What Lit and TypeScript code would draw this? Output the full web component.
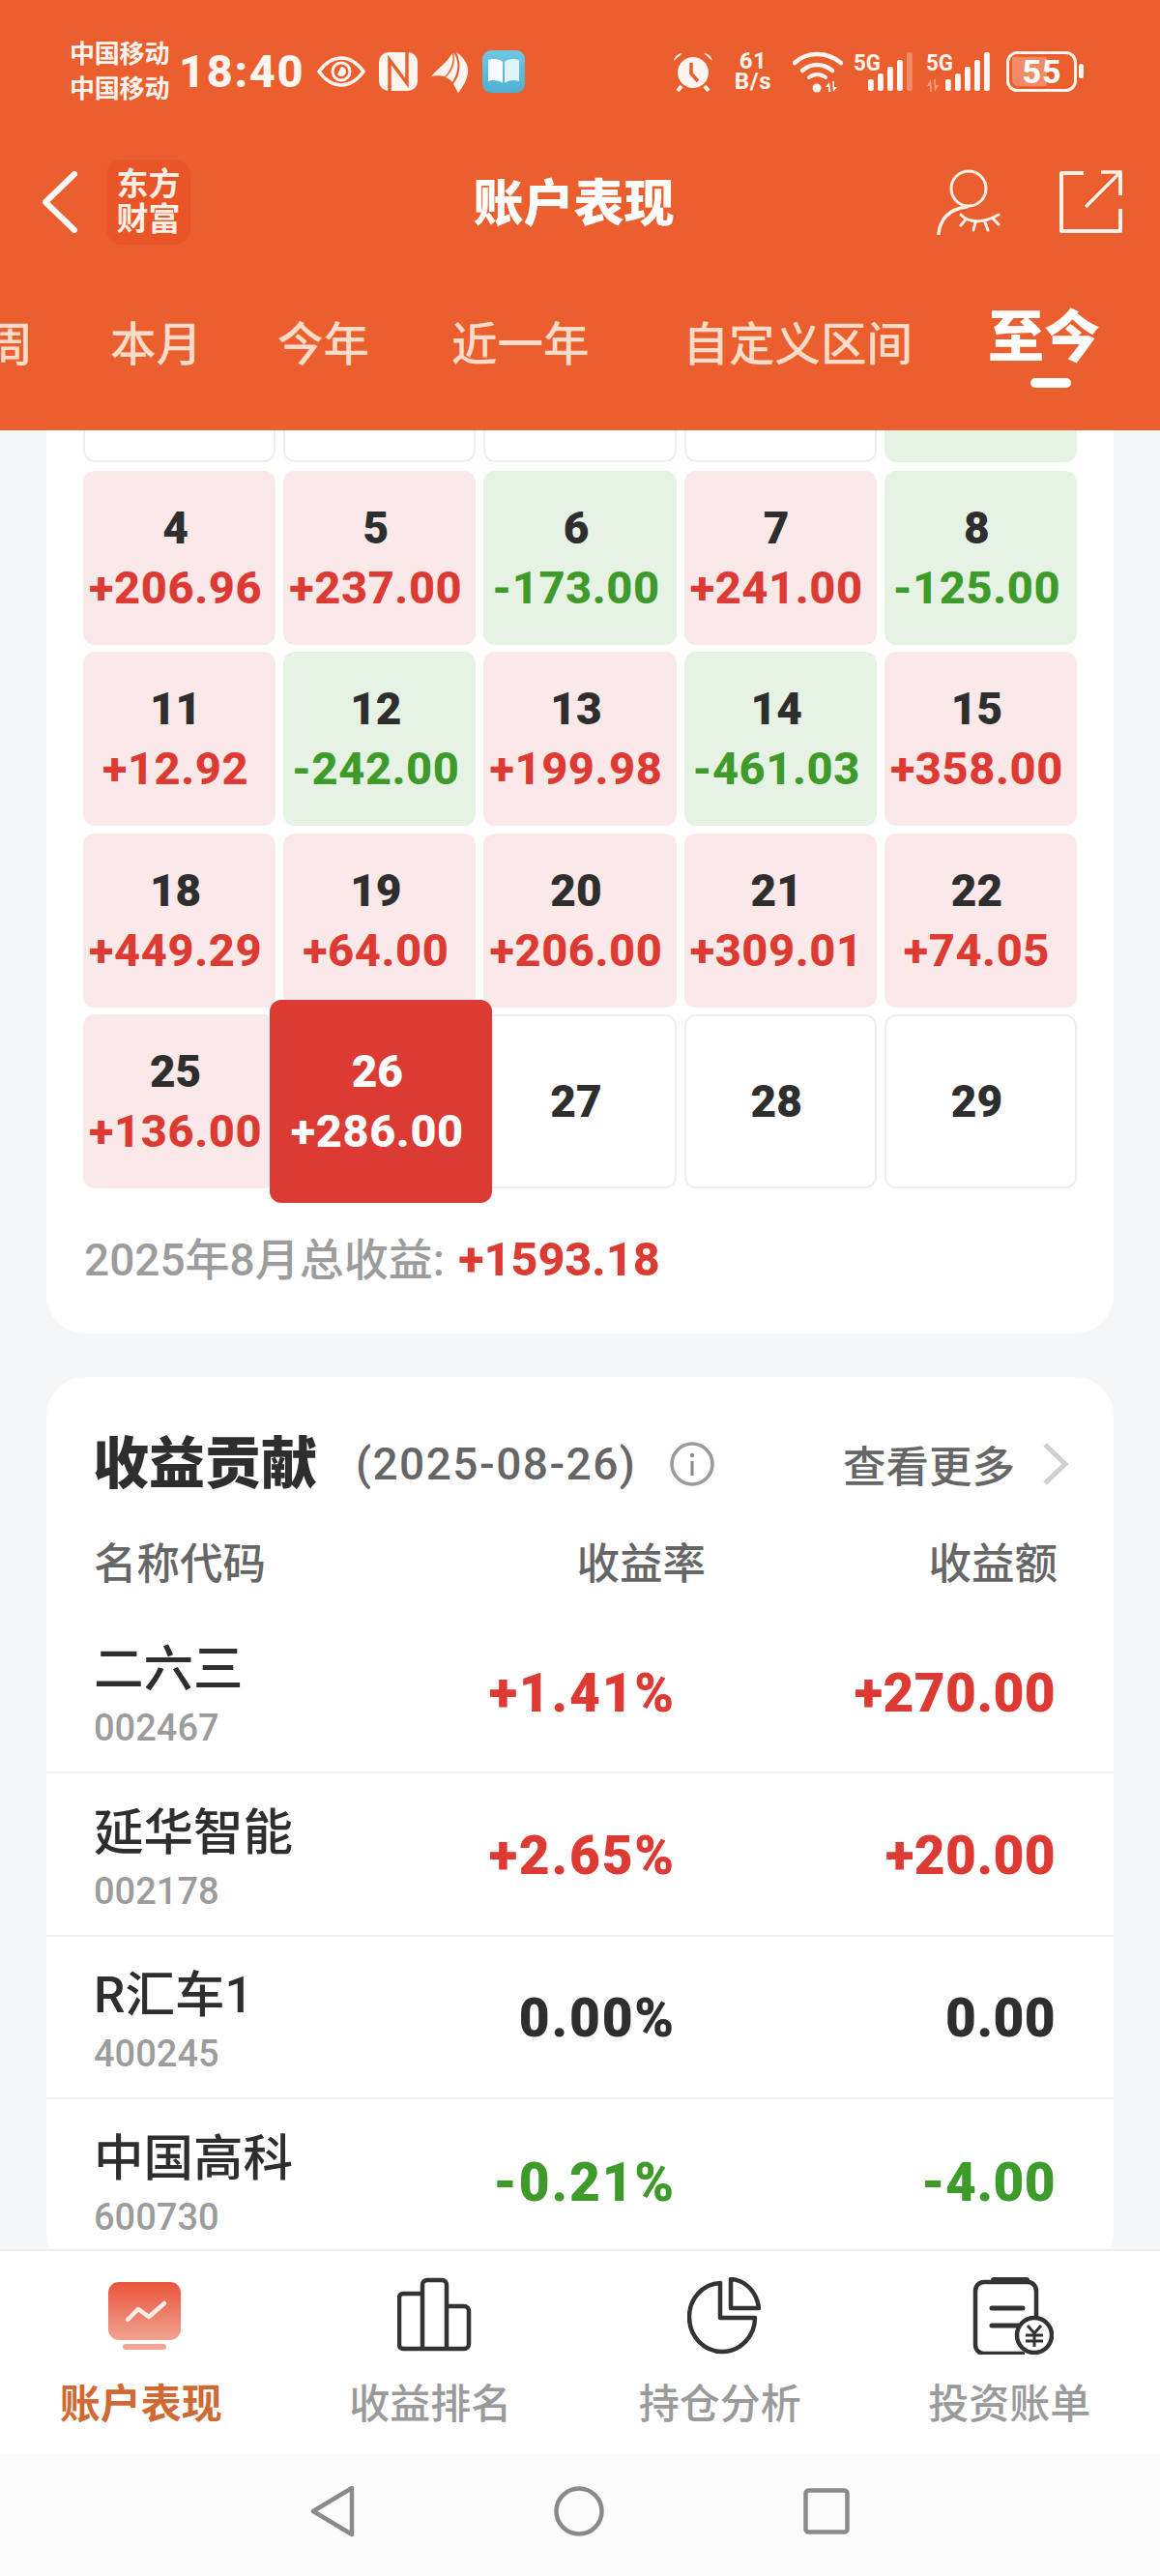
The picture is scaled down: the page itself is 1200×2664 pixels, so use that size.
import { LitElement, html, css, svg } from "lit";
import { customElement } from "lit/decorators.js";

type Cell = { d?: string; v?: string; k: "r" | "g" | "e"; cut?: boolean; today?: boolean };
const cells: Cell[] = [
  { k: "e", cut: true }, { k: "e", cut: true }, { k: "e", cut: true }, { k: "e", cut: true }, { k: "g", cut: true },
  { d: "4", v: "+206.96", k: "r" }, { d: "5", v: "+237.00", k: "r" }, { d: "6", v: "-173.00", k: "g" }, { d: "7", v: "+241.00", k: "r" }, { d: "8", v: "-125.00", k: "g" },
  { d: "11", v: "+12.92", k: "r" }, { d: "12", v: "-242.00", k: "g" }, { d: "13", v: "+199.98", k: "r" }, { d: "14", v: "-461.03", k: "g" }, { d: "15", v: "+358.00", k: "r" },
  { d: "18", v: "+449.29", k: "r" }, { d: "19", v: "+64.00", k: "r" }, { d: "20", v: "+206.00", k: "r" }, { d: "21", v: "+309.01", k: "r" }, { d: "22", v: "+74.05", k: "r" },
  { d: "25", v: "+136.00", k: "r" }, { d: "26", v: "+286.00", k: "r", today: true }, { d: "27", k: "e" }, { d: "28", k: "e" }, { d: "29", k: "e" },
];
const rows = [
  { n: "二六三", c: "002467", r: "+1.41%", a: "+270.00", k: "up" },
  { n: "延华智能", c: "002178", r: "+2.65%", a: "+20.00", k: "up" },
  { n: "R汇车1", c: "400245", r: "0.00%", a: "0.00", k: "flat" },
  { n: "中国高科", c: "600730", r: "-0.21%", a: "-4.00", k: "down" },
];

const HS = [12, 18, 25, 32, 40];
const bars = (x: number, opacityLast: number) =>
  HS.map((h, i) => svg`<rect x=${x + i * 10} y=${42 - h} width="5.8" height=${h} rx="2" fill="#fff8f4" opacity=${i === HS.length - 1 ? opacityLast : 1}></rect>`);

@customElement("app-root")
export class AppRoot extends LitElement {
  static styles = css`
    :host { display: block; width: 1200px; height: 2664px; overflow: hidden; }
    * { box-sizing: border-box; }
    .page { width: 1200px; height: 2664px; display: flex; flex-direction: column; background: #f5f6f8;
      font-family: Roboto, "Noto Sans CJK SC", sans-serif; color: #2e2e2e; }
    .header { height: 445px; background: #ea5f2d; color: #fff; flex: none; display: flex; flex-direction: column; }
    .status { height: 150px; padding: 50px 78px 0 72px; display: flex; justify-content: space-between; align-items: flex-start; color: #fff5f0; }
    .sl, .sr { display: flex; align-items: center; height: 48px; }
    .carrier { width: 102px; font-size: 26px; line-height: 36px; font-weight: 700; letter-spacing: -.2px; white-space: nowrap; }
    .time { font-size: 47px; font-weight: 800; margin: 0 13px 0 11px; letter-spacing: 1.6px; line-height: 48px; }
    .sl svg { display: block; margin-right: 13px; }
    .sr svg { display: block; }
    .alarm { margin-left: 2px; }
    .speed { width: 44px; margin: 0 19px 0 19px; text-align: center; font-weight: 700; font-size: 24px; line-height: 21px; letter-spacing: .6px; }
    .g1 { margin-left: 11px; }
    .g2 { margin-left: 13px; }
    .bat { margin-left: 17px; }
    .nav { height: 118px; display: flex; align-items: center; padding: 0 39px 0 44px; }
    .logo { width: 87px; height: 88px; margin-left: 30px; background: #e95526; border-radius: 16px; color: #fdeee6;
      font-size: 33px; line-height: 36px; font-weight: 600; text-align: center; padding-top: 8px; }
    .title { flex: 1; text-align: center; font-size: 52px; font-weight: 900; margin: -6px 0 0 21px; }
    .share { margin-left: 60px; }
    .nav svg { display: block; }
    .tabs { flex: 1; display: flex; justify-content: flex-end; align-items: flex-start; gap: 78px; padding: 57px 62px 0 0; overflow: hidden; white-space: nowrap; }
    .tab { font-size: 47.5px; line-height: 64px; font-weight: 500; color: #fcdcc9; flex: none; }
    .tab.w0 { margin-left: 2px; }
    .tab.w1 { margin-left: 7px; }
    .tab.w2 { margin-left: 19px; }
    .tab.on { color: #fff; font-size: 58px; font-weight: 900; margin-top: -8px; position: relative; }
    .tab.on::after { content: ""; position: absolute; left: 44px; top: 74px; width: 42px; height: 10px; border-radius: 5px; background: #fff; }
    .main { flex: 1; min-height: 0; overflow: hidden; padding: 0 48px; }
    .card { background: #fff; border-radius: 0 0 40px 40px; }
    .cal { padding: 0 38px; height: 934px; }
    .grid { display: grid; grid-template-columns: repeat(5, 1fr); grid-template-rows: 34px repeat(4, 180px); column-gap: 8px; row-gap: 7.5px; }
    .cell { border-radius: 12px; display: flex; flex-direction: column; align-items: center; justify-content: center; font-weight: 900; font-size: 46px; line-height: 61px; border: 2px solid transparent; white-space: nowrap; padding-right: 8px; }
    .cell.cut { border-radius: 0 0 12px 12px; border-top: 0; margin-bottom: 1px; }
    .cell.r { background: #fbe9e9; color: #dc3a32; }
    .cell.g { background: #e6f3e4; color: #3e9b2b; }
    .cell.e { background: #fff; border-color: #eeeeee; }
    .day { color: #2e2e2e; }
    .val { font-size: 47px; font-weight: 800; letter-spacing: .6px; }
    .cell.today { background: #db3b32; color: #fff; margin: -15px -17px -15px -14px; border: 0; position: relative; z-index: 1; border-radius: 12px; }
    .cell.today .day { color: #fff; }
    .sum { margin-top: 47px; margin-left: 1px; font-size: 46px; line-height: 54px; font-weight: 500; color: #9c9c9c; white-space: nowrap; }
    .sum b { font-size: 48.5px; color: #db3b32; font-weight: 800; margin-left: 3px; }
    .contrib { margin-top: 45px; border-radius: 40px; padding: 58px 0 9px; }
    .chead { display: flex; align-items: center; padding: 0 46px 0 48px; height: 64px; }
    .chead h2 { margin: 0; font-size: 58px; font-weight: 900; line-height: 64px; }
    .date { font-size: 46px; font-weight: 500; color: #666; margin-left: 40px; letter-spacing: 1.5px; white-space: nowrap; }
    .info { margin-left: 35px; display: block; }
    .more { margin-left: auto; font-size: 44.5px; font-weight: 500; color: #666; margin-top: -2px; }
    .chev { margin-left: 28px; display: block; }
    .cols { display: grid; grid-template-columns: 1fr 300px 364px; padding: 0 58px 0 49px; margin-top: 35px; height: 64px; margin-bottom: 21px; align-items: center; font-size: 44.5px; font-weight: 500; color: #666; }
    .cols span:nth-child(n+2) { text-align: right; }
    .row { display: grid; grid-template-columns: 1fr 300px 366px; padding: 0 60px 0 49px; height: 168.4px; align-items: center; border-bottom: 2px solid #f0f0f0; }
    .row:last-child { border-bottom: 0; }
    .who { padding-top: 12px; }
    .nm { font-size: 51.5px; font-weight: 500; line-height: 64px; white-space: nowrap; }
    .cd { font-size: 38px; font-weight: 500; color: #9c9c9c; line-height: 56px; }
    .num { text-align: right; font-size: 55px; font-weight: 900; letter-spacing: .4px; padding-top: 3px; }
    .rate { padding-right: 27px; letter-spacing: 1.8px; font-size: 55px; }
    .up { color: #dc3a32; } .down { color: #3e9b2b; } .flat { color: #2e2e2e; }
    .tabbar { flex: none; height: 211px; background: #fff; border-top: 2px solid #eeeeee; display: grid; grid-template-columns: repeat(4, 299.5px); margin-left: -4px; width: 1204px; }
    .tb { display: flex; flex-direction: column; align-items: center; padding-top: 29px; font-size: 42px; font-weight: 500; color: #9a9a9a; }
    .tb svg { display: block; height: 80px; margin: -2px 0 0 8px; }
    .tb svg.bars { margin-left: 11px; }
    .tb span { margin-top: 25px; line-height: 54px; }
    .tb.on { color: #cf6a35; font-weight: 700; }
    .sys { flex: none; height: 127px; background: #fbfbfb; display: flex; align-items: center; justify-content: center; padding-bottom: 7px; gap: 206px; }
    .sys svg { display: block; }
  `;

  render() {
    return html`<div class="page">
      <div class="header">
        <div class="status">
          <div class="sl">
            <div class="carrier">中国移动<br />中国移动</div>
            <div class="time">18:40</div>
            <svg width="50" height="32" viewBox="0 0 50 32"><path d="M2 16C10 5 18 2 25 2s15 3 23 14c-8 11-16 14-23 14S10 27 2 16z" fill="none" stroke="currentColor" stroke-width="3.5"/><circle cx="25" cy="16" r="9" fill="none" stroke="currentColor" stroke-width="3"/><path d="M25 11a5 5 0 1 1-4 8z" fill="currentColor"/></svg>
            <svg width="42" height="42" viewBox="0 0 42 42"><rect x="1" y="1" width="40" height="40" rx="10" fill="currentColor"/><path d="M12 42V9L30 33V0" fill="none" stroke="#ea5f2d" stroke-width="3.500"/></svg>
            <svg width="40" height="44" viewBox="0 0 40 44"><path d="M0 27C8 18 15 14 22 3C24 12 20 22 14 27C9 26 4 26 0 27z" fill="currentColor"/><path d="M23 2C29 10 29 22 22 33C20 30 17 29 15 28C22 22 26 12 23 2z" fill="currentColor"/><path d="M26 2C35 8 39 16 38 24C36 34 31 40 28 44C26 41 25 38 23 35C31 25 31 12 26 2z" fill="currentColor"/></svg>
            <svg width="44" height="44" viewBox="0 0 44 44"><defs><linearGradient id="bk" x1="0" y1="0" x2="0" y2="1"><stop offset="0" stop-color="#6fc6e2"/><stop offset="1" stop-color="#4fb0d2"/></linearGradient></defs><rect width="44" height="44" rx="9" fill="url(#bk)"/><path d="M6 10c6-2 12-1 15 2v22c-4-3-10-4-15-2z" fill="#f3fbfe"/><path d="M38 10c-6-2-12-1-15 2v22c4-3 10-4 15-2z" fill="#dff3fa"/></svg>
          </div>
          <div class="sr">
            <svg class="alarm" width="42" height="42" viewBox="0 0 42 42"><circle cx="21" cy="22" r="16" fill="currentColor"/><path d="M1 10c1-5 5-8 9-8zM41 10c-1-5-5-8-9-8z" fill="currentColor"/><path d="M9 36l-4 5M33 36l4 5" stroke="currentColor" stroke-width="4"/><path d="M19 12v11l7 8" fill="none" stroke="#ea5f2d" stroke-width="3.5"/></svg>
            <div class="speed">61<br />B/s</div>
            <svg width="52" height="44" viewBox="0 0 52 44"><path d="M2 13C15 1 35 1 50 13" fill="none" stroke="currentColor" stroke-width="4.500" stroke-linecap="round"/><path d="M10 21C19 13 31 13 41 21" fill="none" stroke="currentColor" stroke-width="4.500" stroke-linecap="round"/><path d="M17 28c5-4 12-4 17 0" fill="none" stroke="currentColor" stroke-width="4" stroke-linecap="round"/><circle cx="25" cy="39" r="4.500" fill="currentColor"/><path d="M38 33l-4 5h3v5h2.500zM42 43l4-5h-3v-6h-2z" fill="currentColor"/></svg>
            <svg class="g1" width="62" height="44" viewBox="0 0 62 44"><text x="0" y="21" font-family="Roboto" font-weight="700" font-size="24" textLength="28" lengthAdjust="spacingAndGlyphs" fill="currentColor">5G</text>${bars(15, 0.3)}</svg>
            <svg class="g2" width="66" height="44" viewBox="0 0 66 44"><text x="0" y="21" font-family="Roboto" font-weight="700" font-size="24" textLength="28" lengthAdjust="spacingAndGlyphs" fill="currentColor">5G</text><path d="M5 30l-4 7h3v6h2zM9 43l4-7h-3v-6H8z" fill="#f59a78"/>${bars(20, 1)}</svg>
            <svg class="bat" width="81" height="42" viewBox="0 0 81 42"><rect x="1.500" y="1.500" width="70" height="39" rx="10" fill="none" stroke="currentColor" stroke-width="3"/><path d="M6 6h36v30H12c-3 0-6-3-6-6z" fill="#f28a66"/><text x="37" y="33" text-anchor="middle" font-family="Roboto" font-weight="800" font-size="34" letter-spacing="1" fill="#fff">55</text><rect x="75" y="13" width="5" height="15" rx="2.500" fill="currentColor"/></svg>
          </div>
        </div>
        <div class="nav">
          <svg width="36" height="64" viewBox="0 0 36 64"><path d="M33 3L3 32l30 29" fill="none" stroke="#fff" stroke-width="6" stroke-linecap="round" stroke-linejoin="round"/></svg>
          <div class="logo">东方<br />财富</div>
          <div class="title">账户表现</div>
          <svg width="66" height="68" viewBox="0 0 66 68"><circle cx="33" cy="20" r="18" fill="none" stroke="#fdf1ea" stroke-width="3"/><path d="M2 67c1-14 10-26 29-28" fill="none" stroke="#fdf1ea" stroke-width="3.500" stroke-linecap="round"/><path d="M25 47c8 9 24 9 39 0M30 52l-5 6M40 55l-2 8M50 55l3 8M58 51l6 6" fill="none" stroke="#fdf1ea" stroke-width="3" stroke-linecap="round"/></svg>
          <svg class="share" width="66" height="66" viewBox="0 0 66 66"><path d="M26 3H3v60h61V40M64 26V3" fill="none" stroke="#fdf1ea" stroke-width="4" stroke-linejoin="round"/><path d="M28 38L62 4M44 2h20v20" fill="none" stroke="#fdf1ea" stroke-width="3.500"/></svg>
        </div>
        <div class="tabs">
          <div class="tab">周</div><div class="tab w0">本月</div><div class="tab">今年</div>
          <div class="tab w1">近一年</div><div class="tab w2">自定义区间</div><div class="tab on">至今</div>
        </div>
      </div>
      <div class="main">
        <div class="card cal">
          <div class="grid">
            ${cells.map((c) => html`<div class="cell ${c.k} ${c.cut ? "cut" : ""} ${c.today ? "today" : ""}">
              ${c.d ? html`<div class="day">${c.d}</div>` : ""}${c.v ? html`<div class="val">${c.v}</div>` : ""}
            </div>`)}
          </div>
          <div class="sum">2025年8月总收益: <b>+1593.18</b></div>
        </div>
        <div class="card contrib">
          <div class="chead">
            <h2>收益贡献</h2>
            <span class="date">(2025-08-26)</span>
            <svg class="info" width="46" height="46" viewBox="0 0 46 46"><circle cx="23" cy="23" r="21" fill="none" stroke="#9a9a9a" stroke-width="3.500"/><circle cx="23" cy="14" r="2.200" fill="#888"/><path d="M23 20v15" stroke="#888" stroke-width="3"/></svg>
            <span class="more">查看更多</span>
            <svg class="chev" width="28" height="44" viewBox="0 0 28 44"><path d="M3 2l21 20L3 42" fill="none" stroke="#cfcfcf" stroke-width="5"/></svg>
          </div>
          <div class="cols"><span>名称代码</span><span>收益率</span><span>收益额</span></div>
          ${rows.map((r) => html`<div class="row">
            <div class="who"><div class="nm">${r.n}</div><div class="cd">${r.c}</div></div>
            <div class="num rate ${r.k}">${r.r}</div>
            <div class="num ${r.k}">${r.a}</div>
          </div>`)}
        </div>
      </div>
      <div class="tabbar">
        <div class="tb on">
          <svg width="76" height="80" viewBox="0 0 76 80"><defs><linearGradient id="mon" x1="0" y1="0" x2="0" y2="1"><stop offset="0" stop-color="#ea533a"/><stop offset="1" stop-color="#f0a292"/></linearGradient></defs><rect y="5" width="75" height="60" rx="11" fill="url(#mon)"/><rect x="15" y="69" width="45" height="6" rx="3" fill="#f2a698"/><path d="M20 44l11-11 11 8 16-14" fill="none" stroke="#fdeeea" stroke-width="4.500" stroke-linecap="round" stroke-linejoin="round"/></svg>
          <span>账户表现</span>
        </div>
        <div class="tb">
          <svg class="bars" width="80" height="80" viewBox="0 0 80 80"><path d="M6 17h20V8a5 5 0 0 1 5-5h15a5 5 0 0 1 5 5v22h18a5 5 0 0 1 5 5v34a5 5 0 0 1-5 5H6a4 4 0 0 1-4-4V21a4 4 0 0 1 4-4zM26 17v57M51 30v44" fill="none" stroke="#333" stroke-width="4.500" stroke-linejoin="round"/></svg>
          <span>收益排名</span>
        </div>
        <div class="tb">
          <svg width="76" height="80" viewBox="0 0 76 80"><path d="M34 6C16 7 2 22 2 41c0 20 15 36 34 36s34-16 34-35H34z" fill="none" stroke="#333" stroke-width="4.500" stroke-linejoin="round"/><path d="M45 2c15 1 27 13 29 30H45z" fill="none" stroke="#333" stroke-width="4.500" stroke-linejoin="round"/></svg>
          <span>持仓分析</span>
        </div>
        <div class="tb">
          <svg width="84" height="80" viewBox="0 0 84 80"><path d="M66 60V14a9 9 0 0 0-9-9H12a9 9 0 0 0-9 9v56a9 9 0 0 0 9 9h40" fill="none" stroke="#333" stroke-width="4.500" stroke-linecap="round"/><rect x="19" y="0" width="40" height="6" rx="3" fill="#333"/><path d="M20 32h32M20 50h32" stroke="#333" stroke-width="5" stroke-linecap="round"/><circle cx="64" cy="60" r="18" fill="#fff" stroke="#333" stroke-width="4.500"/><path d="M57 50l7 8 7-8M55 60h18M55 66h18M64 58v14" fill="none" stroke="#333" stroke-width="3"/></svg>
          <span>投资账单</span>
        </div>
      </div>
      <div class="sys">
        <svg width="46" height="54" viewBox="0 0 46 54"><path d="M43 3L3 27l40 24z" fill="none" stroke="#8a8a8a" stroke-width="4.500" stroke-linejoin="round"/></svg>
        <svg width="52" height="52" viewBox="0 0 52 52"><circle cx="26" cy="26" r="23.500" fill="none" stroke="#8a8a8a" stroke-width="4.500"/></svg>
        <svg width="48" height="48" viewBox="0 0 48 48"><rect x="2.500" y="2.500" width="43" height="43" rx="3" fill="none" stroke="#8a8a8a" stroke-width="4.500"/></svg>
      </div>
    </div>`;
  }
}
